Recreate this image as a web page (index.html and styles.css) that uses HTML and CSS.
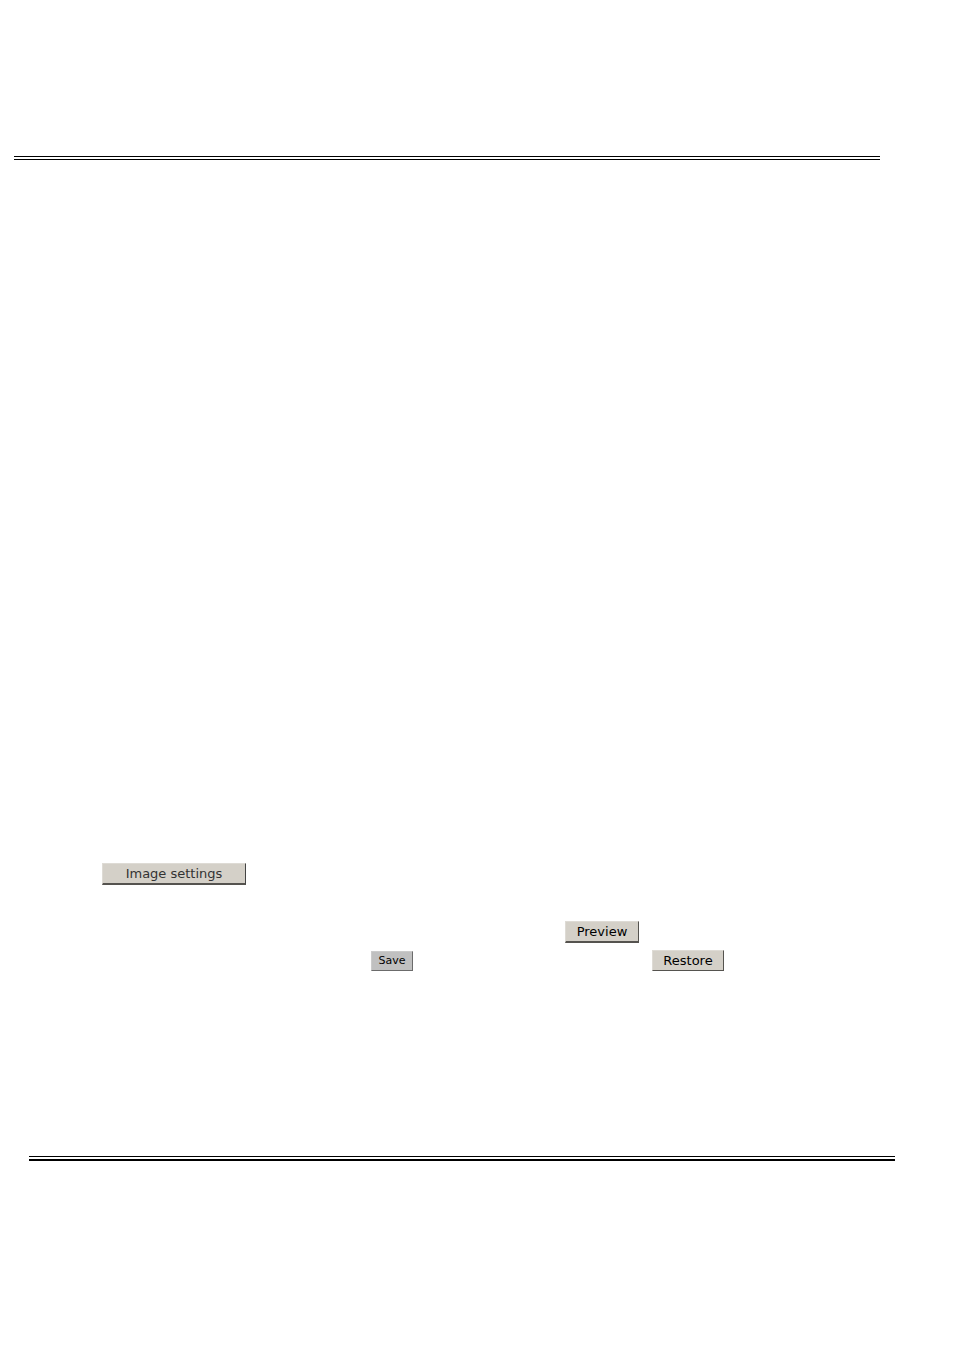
FILE: index.html
```html
<!DOCTYPE html>
<html lang="en">

<head>
    <meta charset="UTF-8">
    <meta name="viewport" content="width=device-width, initial-scale=1.0">
    <title>Image settings</title>
    <link rel="stylesheet" href="styles.css">
</head>

<body>
    <header class="header">
        <div class="rule"></div>
    </header>
    <main class="content">
        <div class="row settings-row">
            <button class="btn btn-settings" type="button">Image settings</button>
        </div>
        <div class="row preview-row">
            <button class="btn btn-preview" type="button">Preview</button>
        </div>
        <div class="row save-row">
            <button class="btn btn-save" type="button">Save</button>
            <button class="btn btn-restore" type="button">Restore</button>
        </div>
    </main>
    <footer class="footer">
        <div class="rule rule-heavy"></div>
    </footer>
</body>

</html>
```

FILE: styles.css
```css
* {
    margin: 0;
    padding: 0;
    box-sizing: border-box;
}
body {
    background-color: white;
    font-family: "DejaVu Sans", Verdana, sans-serif;
}
.header {
    padding: 156px 74px 0 14px;
}
.rule {
    height: 4px;
    border-top: 1px solid black;
    border-bottom: 1px solid black;
}
.rule-heavy {
    height: 5px;
    border-bottom-width: 2px;
}
.content {
    padding: 703px 59px 0 102px;
}
.row {
    display: flex;
    align-items: flex-end;
}
.preview-row {
    margin-top: 36px;
    padding-left: 463px;
}
.save-row {
    margin-top: 7px;
    padding-left: 269px;
    gap: 239px;
}
.btn {
    height: 22px;
    background-color: #d4d0c8;
    border: 1px solid #dedbd5;
    border-right: 1px solid #55534f;
    border-bottom: 2px solid #55534f;
    color: black;
    font-family: inherit;
    font-size: 13px;
    line-height: 18px;
    text-align: center;
}
.btn-settings {
    width: 144px;
    border-right-color: #444;
    color: #333;
}
.btn-preview {
    width: 74px;
}
.btn-save {
    width: 42px;
    height: 20px;
    background-color: #c0c0c0;
    border: 1px solid #cbcbcb;
    border-right-color: #6b6b6b;
    border-bottom-color: #6b6b6b;
    font-size: 11px;
}
.btn-restore {
    width: 72px;
    height: 21px;
    border-bottom-width: 1px;
}
.footer {
    padding: 185px 59px 0 29px;
}
```
